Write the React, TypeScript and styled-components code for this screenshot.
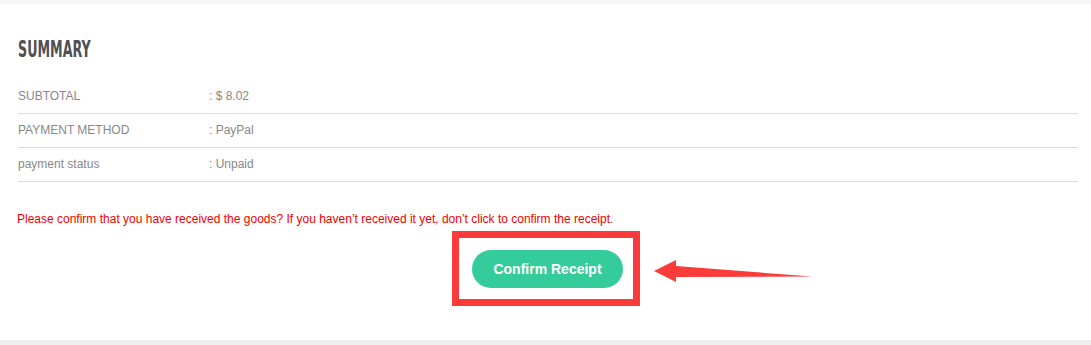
import React from "react";
import styled, { createGlobalStyle } from "styled-components";

const GlobalStyle = createGlobalStyle`
  html, body { margin: 0; padding: 0; background: #ffffff; }
  body { font-family: "Liberation Sans", Arial, sans-serif; }
`;

const Page = styled.div`
  display: flex;
  flex-direction: column;
  width: 1091px;
  height: 345px;
  background: #ffffff;
`;

const Strip = styled.div<{ $h: number; $c: string }>`
  height: ${(p) => p.$h}px;
  flex: none;
  background: ${(p) => p.$c};
`;

const Card = styled.section`
  flex: 1;
  display: flex;
  flex-direction: column;
  padding: 33px 13px 0 18px;
`;

const Title = styled.h2`
  margin: 0;
  height: 24px;
  font-family: "DejaVu Sans Condensed", "Liberation Sans", sans-serif;
  font-weight: 700;
  font-size: 23.5px;
  line-height: 24px;
  color: #4f4f55;
  letter-spacing: 0;
`;

const TitleText = styled.span`
  display: inline-block;
  transform: scaleX(0.6);
  transform-origin: left center;
`;

const Table = styled.div`
  margin-top: 19px;
  display: flex;
  flex-direction: column;
`;

const Row = styled.div`
  display: grid;
  grid-template-columns: 191px 1fr;
  height: 33px;
  line-height: 33px;
  border-bottom: 1px solid #dddddd;
  font-size: 12px;
  color: #888888;
`;

const Notice = styled.p`
  margin: 29px 0 0 -1px;
  font-size: 12px;
  line-height: 16px;
  color: #f20000;
`;

const Center = styled.div`
  display: flex;
  justify-content: center;
  margin-top: 4px;
  padding-right: 4px;
`;

const Annotated = styled.div`
  position: relative;
`;

const Highlight = styled.div`
  border: 7px solid #fd3a3a;
  padding: 12px 10px 11px 13px;
  display: flex;
`;

const Button = styled.button`
  width: 151px;
  height: 38px;
  border: none;
  border-radius: 19px;
  background: #35cc9b;
  color: #ffffff;
  font-family: "Liberation Sans", Arial, sans-serif;
  font-weight: 700;
  font-size: 14px;
  padding: 0;
  cursor: pointer;
`;

const Arrow = styled.svg`
  position: absolute;
  left: calc(100% + 10px);
  top: 24px;
`;

export default function App() {
  const rows = [
    ["SUBTOTAL", ": $ 8.02"],
    ["PAYMENT METHOD", ": PayPal"],
    ["payment status", ": Unpaid"],
  ];
  return (
    <>
      <GlobalStyle />
      <Page>
        <Strip $h={4} $c="#f5f6f8" />
        <Card>
          <Title>
            <TitleText>SUMMARY</TitleText>
          </Title>
          <Table>
            {rows.map(([k, v]) => (
              <Row key={k}>
                <span>{k}</span>
                <span>{v}</span>
              </Row>
            ))}
          </Table>
          <Notice>
            Please confirm that you have received the goods? If you haven’t received it yet, don’t click to confirm the receipt.
          </Notice>
          <Center>
            <Annotated>
              <Highlight>
                <Button>Confirm Receipt</Button>
              </Highlight>
              <Arrow width="166" height="32" viewBox="0 0 166 32">
                <polygon
                  points="4,16 26,5 26,11 162,21.5 26,22 26,27"
                  fill="#fc3b3b"
                />
              </Arrow>
            </Annotated>
          </Center>
        </Card>
        <Strip $h={5} $c="#efefef" />
      </Page>
    </>
  );
}
